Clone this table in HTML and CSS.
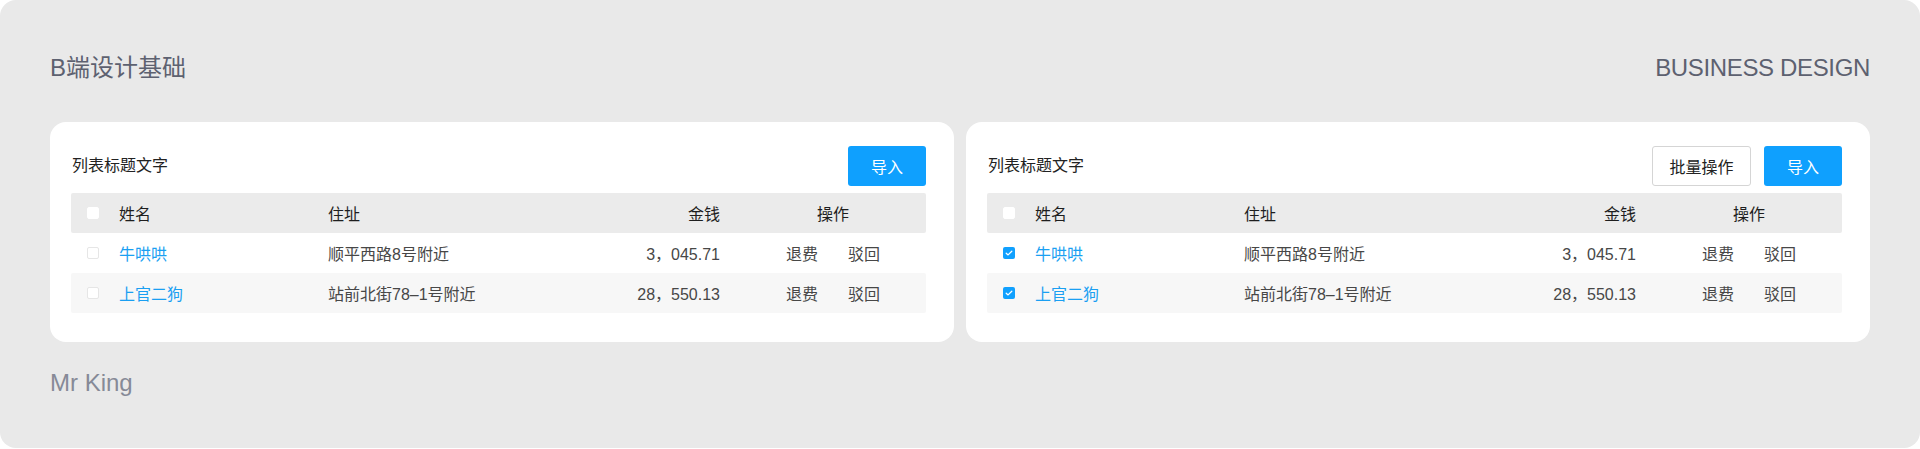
FILE: index.html
```html
<!DOCTYPE html>
<html lang="zh-CN">
<head>
<meta charset="utf-8">
<title>B端设计基础</title>
<link rel="stylesheet" href="styles.css">
</head>
<body>
<div class="frame">
  <header class="top">
    <h1 class="brand">B端设计基础</h1>
    <div class="tag">BUSINESS DESIGN</div>
  </header>
  <div class="cards">
    <section class="card">
      <div class="card-head">
        <div class="card-title">列表标题文字</div>
        <div class="actions">
          <button class="btn btn-primary">导入</button>
        </div>
      </div>
      <div class="table">
        <div class="row row-head">
          <div class="c-check"><span class="cb cb-head"></span></div>
          <div class="c-name">姓名</div>
          <div class="c-addr">住址</div>
          <div class="c-money">金钱</div>
          <div class="c-ops"><span>操作</span></div>
        </div>
        <div class="row">
          <div class="c-check"><span class="cb"></span></div>
          <div class="c-name link">牛哄哄</div>
          <div class="c-addr">顺平西路8号附近</div>
          <div class="c-money">3，045.71</div>
          <div class="c-ops"><span>退费</span><span>驳回</span></div>
        </div>
        <div class="row row-alt">
          <div class="c-check"><span class="cb"></span></div>
          <div class="c-name link">上官二狗</div>
          <div class="c-addr">站前北街78–1号附近</div>
          <div class="c-money">28，550.13</div>
          <div class="c-ops"><span>退费</span><span>驳回</span></div>
        </div>
      </div>
    </section>
    <section class="card">
      <div class="card-head">
        <div class="card-title">列表标题文字</div>
        <div class="actions">
          <button class="btn btn-default">批量操作</button>
          <button class="btn btn-primary">导入</button>
        </div>
      </div>
      <div class="table">
        <div class="row row-head">
          <div class="c-check"><span class="cb cb-head"></span></div>
          <div class="c-name">姓名</div>
          <div class="c-addr">住址</div>
          <div class="c-money">金钱</div>
          <div class="c-ops"><span>操作</span></div>
        </div>
        <div class="row">
          <div class="c-check"><span class="cb cb-on"><svg viewBox="0 0 12 12" width="12" height="12"><path d="M3.2 6.2 L5.1 7.9 L8.8 4.3" fill="none" stroke="#fff" stroke-width="1.3" stroke-linecap="round" stroke-linejoin="round"/></svg></span></div>
          <div class="c-name link">牛哄哄</div>
          <div class="c-addr">顺平西路8号附近</div>
          <div class="c-money">3，045.71</div>
          <div class="c-ops"><span>退费</span><span>驳回</span></div>
        </div>
        <div class="row row-alt">
          <div class="c-check"><span class="cb cb-on"><svg viewBox="0 0 12 12" width="12" height="12"><path d="M3.2 6.2 L5.1 7.9 L8.8 4.3" fill="none" stroke="#fff" stroke-width="1.3" stroke-linecap="round" stroke-linejoin="round"/></svg></span></div>
          <div class="c-name link">上官二狗</div>
          <div class="c-addr">站前北街78–1号附近</div>
          <div class="c-money">28，550.13</div>
          <div class="c-ops"><span>退费</span><span>驳回</span></div>
        </div>
      </div>
    </section>
  </div>
  <footer class="author">Mr King</footer>
</div>
</body>
</html>
```

FILE: styles.css
```css
* { box-sizing: border-box; }

html, body {
  margin: 0;
  padding: 0;
  background: #ffffff;
}

body {
  font-family: "Liberation Sans", "Noto Sans CJK SC", sans-serif;
  color: #333;
}

.frame {
  height: 448px;
  background: #e9e9e9;
  border-radius: 16px;
  padding: 52px 50px 0 50px;
}

.top {
  display: flex;
  justify-content: space-between;
  align-items: center;
  height: 32px;
}

.brand {
  margin: 0;
  font-weight: normal;
  font-size: 24px;
  line-height: 32px;
  color: #5d6170;
}

.tag {
  font-size: 24px;
  line-height: 32px;
  color: #5d6170;
  letter-spacing: -0.35px;
}

.cards {
  display: flex;
  gap: 12px;
  margin-top: 38px;
}

.card {
  flex: 1 1 0;
  height: 220px;
  background: #fff;
  border-radius: 16px;
  padding: 24px 28px 0 21px;
}

.card-head {
  display: flex;
  justify-content: space-between;
  align-items: center;
  height: 40px;
  padding-left: 1px;
}

.card-title {
  font-size: 16px;
  line-height: 24px;
  color: #222;
}

.actions {
  display: flex;
  gap: 13px;
}

.btn {
  font-family: "Liberation Sans", "Noto Sans CJK SC", sans-serif;
  font-size: 16px;
  height: 40px;
  border-radius: 3px;
  padding: 0;
  cursor: pointer;
}

.btn-primary {
  width: 78px;
  background: #0fa0fe;
  border: none;
  color: #fff;
}

.btn-default {
  width: 99px;
  background: #fff;
  border: 1px solid #d5d5d5;
  color: #222;
}

.table {
  margin-top: 7px;
  font-size: 16px;
}

.row {
  display: grid;
  grid-template-columns: 48px 209px 250px 142px 1fr;
  align-items: center;
  height: 40px;
  color: #474747;
  border-radius: 2px;
}

.row-head {
  background: #ebebeb;
  color: #1e1e1e;
}

.row-alt {
  background: #f7f7f7;
}

.c-check {
  padding-left: 16px;
  display: flex;
  align-items: center;
}

.cb {
  display: block;
  width: 12px;
  height: 12px;
  border-radius: 2px;
  background: #fff;
  border: 1px solid #e6e6e6;
}

.cb-head {
  border-color: #fff;
}

.cb-on {
  background: #10a0fe;
  border: none;
}

.cb-on svg {
  display: block;
}

.link {
  color: #1a9ff2;
}

.c-money {
  text-align: right;
}

.c-ops {
  padding-left: 20px;
  display: flex;
  justify-content: center;
  gap: 30px;
}

.author {
  margin-top: 25px;
  font-size: 24px;
  line-height: 32px;
  color: #868a97;
}
```
